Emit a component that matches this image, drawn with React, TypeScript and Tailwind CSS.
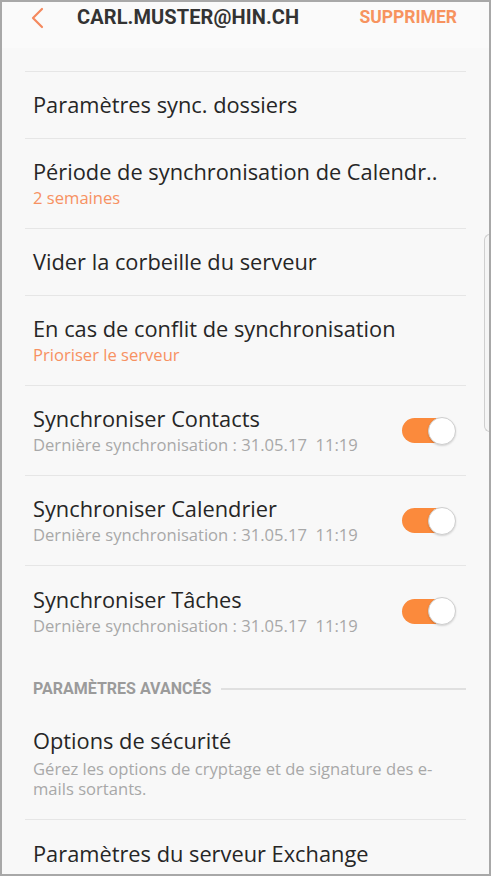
import React from "react";

type Row = {
  title: string;
  sub?: string;
  accent?: boolean;
  toggle?: boolean;
  last?: boolean;
};

const lastSync = "Dernière synchronisation : 31.05.17  11:19";

const topRows: Row[] = [
  { title: "Paramètres sync. dossiers" },
  { title: "Période de synchronisation de Calendr..", sub: "2 semaines", accent: true },
  { title: "Vider la corbeille du serveur" },
  { title: "En cas de conflit de synchronisation", sub: "Prioriser le serveur", accent: true },
  { title: "Synchroniser Contacts", sub: lastSync, toggle: true },
  { title: "Synchroniser Calendrier", sub: lastSync, toggle: true },
  { title: "Synchroniser Tâches", sub: lastSync, toggle: true, last: true },
];

function Toggle() {
  return (
    <div className="relative w-[54px] h-[28px] flex items-center shrink-0">
      <div className="h-[25px] w-[46px] rounded-full bg-[#fb8a3c]" />
      <div className="absolute right-0 top-0 h-[28px] w-[28px] rounded-full bg-white border border-[#cfcfcf] shadow-[0_1px_2px_rgba(0,0,0,0.15)]" />
    </div>
  );
}

function SettingRow({ row }: { row: Row }) {
  const tall = !!row.sub;
  return (
    <div
      className={`flex items-center justify-between ${row.last ? "" : "border-b border-[#e6e6e6]"} ${tall ? "h-[90px]" : "h-[67px]"}`}
    >
      <div className="flex flex-col pl-[8px]">
        <span className="text-[21.8px] leading-[28px] text-[#262626] whitespace-nowrap">{row.title}</span>
        {row.sub && (
          <span
            className={`text-[16.6px] leading-[22px] mt-[1px] whitespace-pre ${row.accent ? "text-[#f79162]" : "text-[#a8a8a8]"}`}
          >
            {row.sub}
          </span>
        )}
      </div>
      {row.toggle && (
        <div className="pr-[10px]">
          <Toggle />
        </div>
      )}
    </div>
  );
}

export default function App() {
  return (
    <div
      className="w-[491px] h-[876px] overflow-hidden bg-[#f8f8f8] border-2 border-[#a8a8a8] relative"
      style={{ fontFamily: "'Open Sans', Roboto, sans-serif" }}
    >
      <header
        className="h-[46px] bg-[#fafafa] flex items-start pt-[1px] px-[28px]"
        style={{ fontFamily: "Roboto, 'Open Sans', sans-serif" }}
      >
        <svg width="16" height="24" viewBox="0 0 16 24" className="shrink-0 mt-[3px]">
          <path d="M12 3 L3 12 L12 21" fill="none" stroke="#f4895e" strokeWidth="2.2" strokeLinecap="round" strokeLinejoin="round" />
        </svg>
        <h1 className="ml-[31px] text-[20px] leading-[28px] font-bold text-[#333] tracking-[0.1px]">CARL.MUSTER@HIN.CH</h1>
        <span className="ml-auto mr-[4px] text-[17.5px] leading-[28px] font-bold text-[#f7935f]">SUPPRIMER</span>
      </header>

      <div className="px-[23px]">
        <div className="h-[24px] border-b border-[#e6e6e6]" />
        {topRows.map((r) => (
          <SettingRow key={r.title} row={r} />
        ))}

        <div className="flex items-center gap-[10px] pl-[8px] h-[66px]">
          <span className="text-[16px] font-bold text-[#9b9b9b] whitespace-nowrap" style={{ fontFamily: "Roboto, sans-serif" }}>
            PARAMÈTRES AVANCÉS
          </span>
          <div className="flex-1 h-[2px] bg-[#e0e0e0]" />
        </div>

        <div className="border-b border-[#e6e6e6] pt-[5px] pb-[20px] pl-[8px] pr-[24px]">
          <div className="text-[21.8px] leading-[28px] text-[#262626]">Options de sécurité</div>
          <div className="text-[16.6px] leading-[20px] text-[#a8a8a8] mt-[4px]">
            Gérez les options de cryptage et de signature des e-mails sortants.
          </div>
        </div>
        <div className="pl-[8px] pt-[20px]">
          <span className="text-[21.8px] leading-[28px] text-[#262626]">Paramètres du serveur Exchange</span>
        </div>
      </div>

      <div className="absolute right-[-1px] top-[232px] w-[6px] h-[198px] rounded-l-[6px] border border-r-0 border-[#cfcfcf] bg-[#f5f5f5]" />
    </div>
  );
}
